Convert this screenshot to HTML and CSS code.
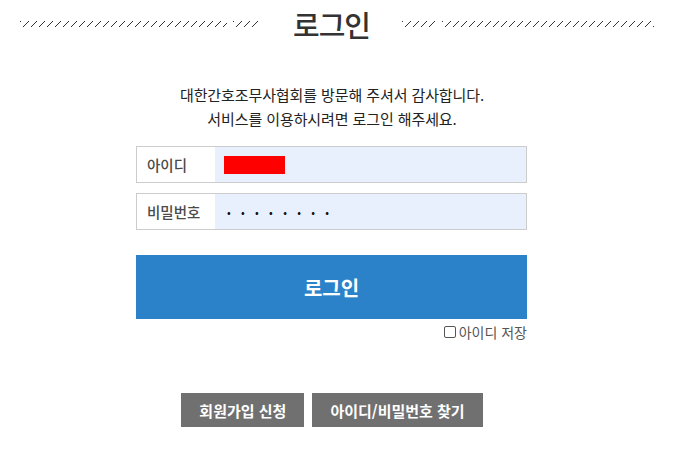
FILE: index.html
```html
<!DOCTYPE html>
<html lang="ko">
<head>
<meta charset="utf-8">
<title>로그인</title>
<link rel="stylesheet" href="styles.css">
</head>
<body>
<div class="page">
  <header class="head">
    <div class="hatch hatch-left"><span class="seg seg-a"></span><span class="seg seg-b"></span></div>
    <h1 class="title">로그인</h1>
    <div class="hatch hatch-right"><span class="seg seg-c"></span><span class="seg seg-d"></span></div>
  </header>
  <p class="intro">대한간호조무사협회를 방문해 주셔서 감사합니다.<br>서비스를 이용하시려면 로그인 해주세요.</p>
  <form class="form">
    <div class="row">
      <label class="label">아이디</label>
      <div class="field"><span class="redact"></span></div>
    </div>
    <div class="row">
      <label class="label">비밀번호</label>
      <div class="field"><span class="dots">••••••••</span></div>
    </div>
    <button type="button" class="login">로그인</button>
    <div class="save"><span class="box"></span>아이디 저장</div>
  </form>
  <div class="links">
    <a class="btn">회원가입 신청</a>
    <a class="btn">아이디/비밀번호 찾기</a>
  </div>
</div>
</body>
</html>
```
FILE: styles.css
```css
* { box-sizing: border-box; }
html, body { margin: 0; padding: 0; background: #fff; }
body { font-family: "Noto Sans CJK KR", "Noto Sans", sans-serif; color: #333; }
.page { width: 664px; }
.head { display: flex; align-items: center; height: 46px; padding-left: 20px; }
.hatch { display: flex; height: 6px; margin-top: 2px; }
.hatch-left { width: 240px; }
.hatch-right { width: 252px; }
.seg { display: block; height: 6px;
  background: repeating-linear-gradient(135deg, #333 0 1px, transparent 1px 5.66px); }
.seg-a { width: 207px; }
.seg-b { width: 27px; margin-left: 6px; }
.seg-c { width: 34px; }
.seg-d { width: 212px; margin-left: 6px; }
.title { margin: 2px 32px 0 33px; font-size: 29px; font-weight: 500; color: #333; line-height: 40px; letter-spacing: -1px; }
.intro { margin: 37px 0 0; text-align: center; font-size: 15px; line-height: 24px; color: #222; letter-spacing: -0.1px; }
.form { width: 391px; margin: 15px 0 0 136px; display: flex; flex-direction: column; }
.row { display: flex; height: 37px; border: 1px solid #ccc; margin-bottom: 10px; }
.label { width: 78px; display: flex; align-items: center; padding-left: 10px; font-size: 14.5px; font-weight: 500; color: #4a4a4a; background: #fff; }
.field { flex: 1; background: #e8f0fe; display: flex; align-items: center; padding-left: 9px; }
.redact { width: 61px; height: 18px; background: #ff0000; }
.dots { font-size: 11px; letter-spacing: 10.3px; color: #111; padding-left: 3px; }
.login { margin-top: 15px; height: 64px; border: 0; background: #2b82c9; color: #fff; font-family: inherit; font-size: 20px; font-weight: 700; }
.save { align-self: flex-end; display: flex; align-items: center; margin-top: 4px; font-size: 14px; color: #555; line-height: 18px; }
.box { width: 12px; height: 12px; border: 1px solid #555; border-radius: 2px; margin-right: 3px; }
.links { display: flex; justify-content: center; gap: 8px; margin-top: 52px; }
.btn { display: flex; align-items: center; justify-content: center; height: 34px; background: #707070; color: #fff; font-size: 15px; font-weight: 700; padding: 0 18px; }
```
